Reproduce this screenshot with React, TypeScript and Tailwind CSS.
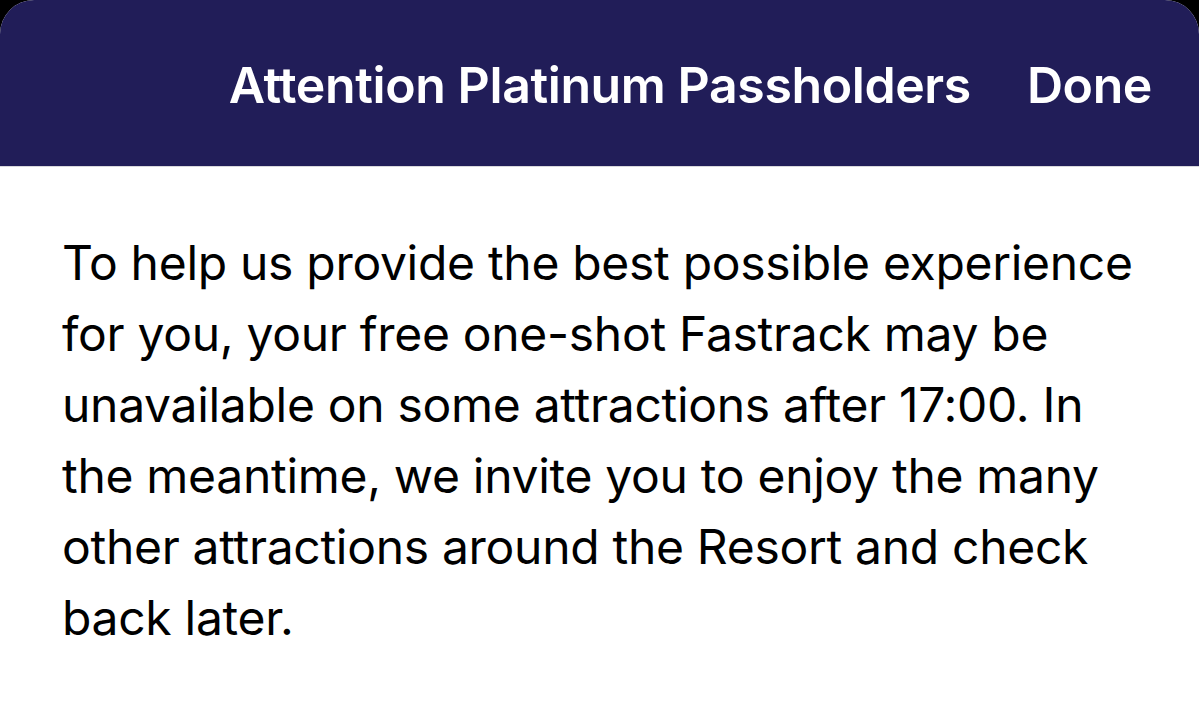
export default function App() {
  return (
    <div className="h-[710px] w-[1199px] overflow-hidden bg-black" style={{ fontFamily: "Inter, 'Liberation Sans', sans-serif" }}>
      <div className="flex h-full flex-col overflow-hidden rounded-t-[34px] bg-white">
        <header className="flex h-[167px] shrink-0 items-center justify-end gap-[56px] border-b border-[#d8d8dc] bg-[#211d58] pr-[47px] pt-[4px]">
          <h1 className="text-[50px] font-semibold tracking-[-0.4px] text-white">Attention Platinum Passholders</h1>
          <button className="text-[50px] font-semibold tracking-[-0.4px] text-white">Done</button>
        </header>
        <p className="pl-[62px] pr-[40px] pt-[60px] text-[48px] leading-[71px] tracking-[-0.3px] text-black">
          To help us provide the best possible experience for you, your free one-shot Fastrack may be unavailable on some attractions after 17:00. In the meantime, we invite you to enjoy the many other attractions around the Resort and check back later.
        </p>
      </div>
    </div>
  )
}
